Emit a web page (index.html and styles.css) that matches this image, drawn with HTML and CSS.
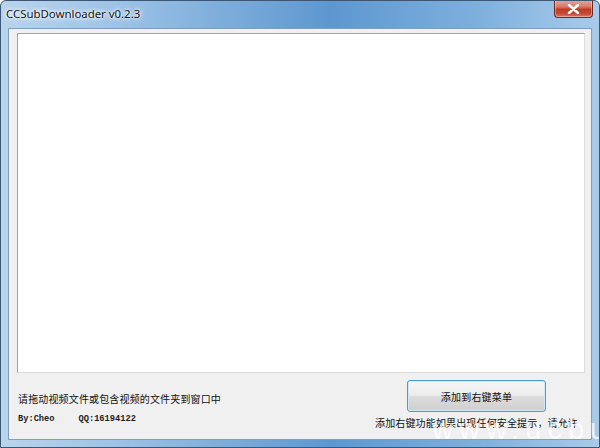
FILE: index.html
```html
<!DOCTYPE html>
<html lang="zh">
<head>
<meta charset="utf-8">
<title>CCSubDownloader v0.2.3</title>
<link rel="stylesheet" href="styles.css">
</head>
<body>
<div class="window">
  <div class="titlebar">
    <span class="title">CCSubDownloader v0.2.3</span>
    <span class="close"><svg width="13" height="10" viewBox="0 0 13 10"><path d="M2 1 L11 9 M11 1 L2 9" stroke="#fff" stroke-width="2.4" stroke-linecap="round"/></svg></span>
  </div>
  <div class="client">
    <div class="list"></div>
    <div class="bottom">
      <div class="left">
        <div class="hint">请拖动视频文件或包含视频的文件夹到窗口中</div>
        <div class="author"><span>By:Cheo</span><span>QQ:16194122</span></div>
      </div>
      <div class="right">
        <button class="btn">添加到右键菜单</button>
        <div class="note">添加右键功能如果出现任何安全提示，请允许</div>
      </div>
    </div>
  </div>
  <div class="watermark">www.ucbug.cc</div>
</div>
</body>
</html>
```
FILE: styles.css
```css
html, body {
  margin: 0;
  padding: 0;
  width: 600px;
  height: 448px;
  overflow: hidden;
  background: #fff;
}
.window {
  position: relative;
  box-sizing: border-box;
  width: 600px;
  height: 448px;
  border: 1px solid #3d5673;
  border-radius: 6px 6px 0 0;
  background:
    linear-gradient(90deg, #b9d4ec 0%, #9cc2e6 20%, #5d97d0 55%, #7eb0de 80%, #a9cbea 100%);
  display: flex;
  flex-direction: column;
  padding: 0 7px 7px 7px;
  overflow: hidden;
}
.titlebar {
  height: 27px;
  display: flex;
  justify-content: space-between;
  align-items: flex-start;
  flex: none;
}
.title {
  margin-top: 5px;
  margin-left: -2px;
  font-family: "Noto Sans", "Open Sans", sans-serif;
  font-size: 11.4px;
  line-height: 16px;
  color: #111;
  text-shadow: 0 0 6px #fff, 0 0 4px #fff, 0 0 2px #fff;
}
.close {
  box-sizing: border-box;
  width: 39px;
  height: 18px;
  margin-top: -1px;
  margin-right: -1px;
  border: 1px solid #6d2a20;
  border-top: none;
  border-radius: 0 0 4px 4px;
  background: linear-gradient(180deg, #e6a89c 0%, #d9786a 40%, #c13a26 55%, #c44a35 80%, #d97b66 100%);
  box-shadow: inset 0 0 0 1px rgba(255,255,255,0.35);
  display: flex;
  align-items: center;
  justify-content: center;
}
.client {
  flex: 1;
  background: #f0f0f0;
  border: 1px solid #7f9fc2;
  display: flex;
  flex-direction: column;
  padding: 4px 6px 0 8px;
}
.list {
  height: 338px;
  flex: none;
  background: #fff;
  border: 1px solid #a3a3a3;
  border-right-color: #dcdcdc;
  border-bottom-color: #dcdcdc;
  border-left-color: #a3a3a3;
}
.bottom {
  flex: 1;
  display: flex;
  justify-content: space-between;
  font-family: "Noto Sans CJK SC", sans-serif;
  color: #111;
}
.left {
  padding-top: 19px;
  padding-left: 1px;
}
.hint {
  font-size: 10px;
  letter-spacing: 0.15px;
  line-height: 14px;
}
.author {
  margin-top: 6px;
  font-family: "Liberation Mono", "DejaVu Sans Mono", monospace;
  font-size: 8.7px;
  font-weight: bold;
  line-height: 14px;
  display: flex;
  gap: 24px;
  color: #222;
}
.right {
  width: 210px;
  display: flex;
  flex-direction: column;
  padding-top: 7px;
}
.btn {
  align-self: flex-start;
  margin-left: 32px;
  box-sizing: border-box;
  width: 139px;
  height: 32px;
  padding: 0;
  border: 1px solid #4c9cd0;
  border-radius: 3px;
  background: linear-gradient(180deg, #f6f6f6 0%, #ececec 48%, #dcdcdc 52%, #cfcfcf 100%);
  box-shadow: inset 0 0 0 1px #cfe9f8;
  font-family: "Noto Sans CJK SC", sans-serif;
  font-size: 10px;
  letter-spacing: 0.2px;
  color: #111;
}
.note {
  margin-top: 4px;
  font-size: 10px;
  letter-spacing: 0.15px;
  line-height: 14px;
  white-space: nowrap;
}
.watermark {
  position: absolute;
  left: 431px;
  top: 412px;
  font-family: "Liberation Sans", sans-serif;
  font-size: 29px;
  letter-spacing: 6px;
  color: rgba(255,255,255,0.75);
  white-space: nowrap;
  pointer-events: none;
}
```
